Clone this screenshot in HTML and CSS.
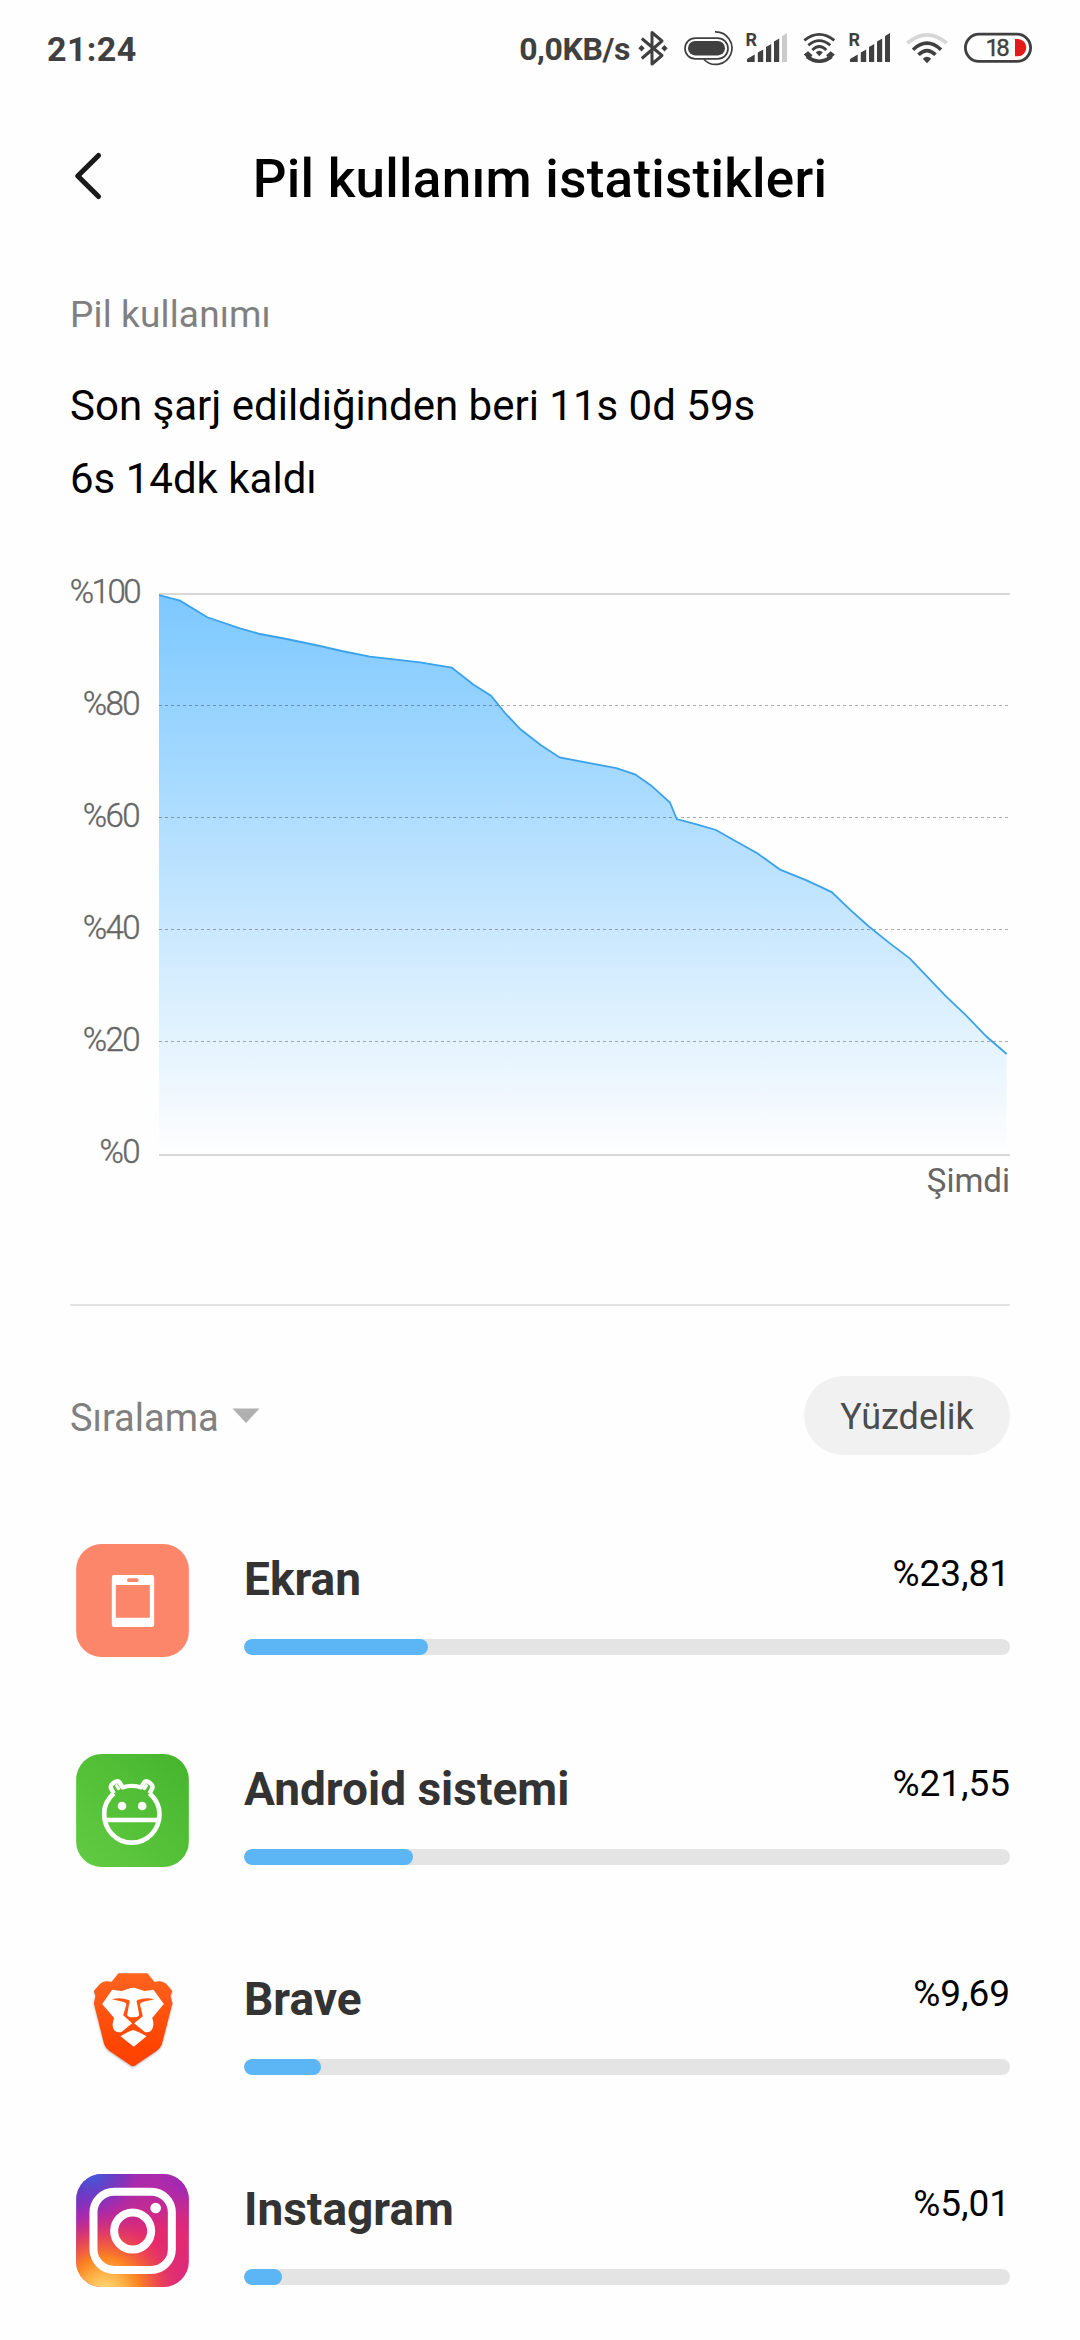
FILE: index.html
```html
<!DOCTYPE html>
<html lang="tr">
<head>
<meta charset="utf-8">
<title>Pil kullanım istatistikleri</title>
<link rel="stylesheet" href="styles.css">
</head>
<body>
<div class="status">
  <span class="clock">21:24</span>
  <div class="status-icons">
    <span class="speed">0,0KB/s</span>
    <svg class="i-bt" width="34" height="40" viewBox="636 29 34 40"><path d="M641.8 38.5 662 55.5 652 64V32.5L662 41 641.8 58.5" fill="none" stroke="#404040" stroke-width="3" stroke-linejoin="round"/><path d="m641.5 45 3.2 3.3-3.2 3.3-3.2-3.3zM664.5 45l3.2 3.3-3.2 3.3-3.2-3.3z" fill="#404040"/></svg>
    <svg class="i-oval" width="52" height="40" viewBox="683 29 52 40"><rect x="685" y="38.2" width="43" height="20.6" rx="10.3" fill="none" stroke="#404040" stroke-width="1.7"/><rect x="688" y="41" width="37" height="14.4" rx="7.2" fill="#404040"/><path d="M715 31.8A16.3 16.3 0 1 1 704 59.5" fill="none" stroke="#404040" stroke-width="1.7"/></svg>
    <svg class="i-sig" width="44" height="40" viewBox="745 29 44 40"><text x="745.6" y="46" class="roam">R</text><path d="M747 62v-3l7.7-4.5V62zM757.8 62v-9.5l5.4-3V62zM766 62V47l5.2-3v18zM774 62V41.5l5.2-3V62z" fill="#404040"/><path d="M782 62V36l5-3v29z" fill="#cbcbcb"/></svg>
    <svg class="i-call" width="36" height="40" viewBox="801 29 36 40"><g fill="none" stroke="#404040" stroke-width="2.8"><path d="M804.3 40.3Q819.3 28.5 834.3 40.3M808.3 45.3Q819.3 36 830.3 45.3M812.3 50Q819.3 43.2 826.3 50"/><path d="M807 56.5Q819.3 66 831.6 56.5" stroke-width="3.6"/></g><path d="M815.7 52.2q3.6-3 7.2 0l-3.6 4zM803.8 54.5l4.2-3.2 4.5 4-3.5 4.5zM834.8 54.5l-4.2-3.2-4.5 4 3.5 4.5z" fill="#404040"/></svg>
    <svg class="i-sig" width="44" height="40" viewBox="745 29 44 40"><text x="745.6" y="46" class="roam">R</text><path d="M747 62v-3l7.7-4.5V62zM757.8 62v-9.5l5.4-3V62zM766 62V47l5.2-3v18zM774 62V41.5l5.2-3V62zM782 62V36l5-3v29z" fill="#404040"/></svg>
    <svg class="i-wifi" width="46" height="40" viewBox="904 29 46 40"><g fill="none" stroke="#404040" stroke-width="3.6"><path d="M907.3 43.2Q927 26.5 946.7 43.2" stroke="#d6d6d6"/><path d="M913 49.7Q927 36.7 941 49.7M918.5 54.8Q927 46.3 935.5 54.8"/></g><path d="M922.8 58.8q4.2-4 8.4 0l-4.2 4.5z" fill="#404040"/></svg>
    <svg class="i-bat" width="68" height="40" viewBox="964 29 68 40"><rect x="965.4" y="34.2" width="65.2" height="27.2" rx="13.6" fill="none" stroke="#404040" stroke-width="2.8"/><text x="985.5" y="56.3" class="level">18</text><path d="M1015 39h3a8.3 8.6 0 0 1 0 17.2h-3z" fill="#e41b1b"/></svg>
  </div>
</div>
<header class="header">
  <svg class="back" width="40" height="60" viewBox="68 149 40 60"><path d="M98.5 155.5 77.8 176 98.5 196.5" fill="none" stroke="#1a1a1a" stroke-width="5.2" stroke-linecap="round" stroke-linejoin="round"/></svg>
  <h1 class="title">Pil kullanım istatistikleri</h1>
</header>
<main class="main">
  <h2 class="section">Pil kullanımı</h2>
  <p class="summary">Son şarj edildiğinden beri 11s 0d 59s<br>6s 14dk kaldı</p>
  <section class="chart">
    <div class="labels"><span class="full">%100</span><span>%80</span><span>%60</span><span>%40</span><span>%20</span><span>%0</span></div>
    <div class="plot">
      <svg width="851" height="563" viewBox="159 593 851 563">
        <defs><linearGradient id="fill" x1="0" y1="595" x2="0" y2="1154" gradientUnits="userSpaceOnUse"><stop offset="0" stop-color="#7cc8ff"/><stop offset="1" stop-color="#fefefe"/></linearGradient></defs>
        <path d="M159 594h851" stroke="#d8d8d8" stroke-width="2"/>
        <path fill="url(#fill)" d="M159 595 180 600.7 207.3 617.3 240 628.3 260 634 286.7 639 320 646 341.7 651 370 656.7 420 662.3 451.7 667.5 473.3 684.5 491 695.7 505 713 520.7 729.5 541 745.3 559.7 757.5 616.3 768.2 635 774.3 651 785.4 670 802.5 676.7 819 696.7 824.3 716 830 736.7 841.8 757.3 853.2 780 869.6 806.7 880.4 831.7 892.1 850 909.6 868.3 926 889.3 942.9 910 958.6 946 996.4 965 1014.3 986.7 1036.8 1006.7 1054V1154H159z"/>
        <path d="M159 705.5h851M159 817.5h851M159 929.5h851M159 1041.5h851" stroke="#000" stroke-opacity=".32" stroke-dasharray="3 3"/>
        <path fill="none" stroke="#3ba2ea" stroke-width="1.8" d="M159 595 180 600.7 207.3 617.3 240 628.3 260 634 286.7 639 320 646 341.7 651 370 656.7 420 662.3 451.7 667.5 473.3 684.5 491 695.7 505 713 520.7 729.5 541 745.3 559.7 757.5 616.3 768.2 635 774.3 651 785.4 670 802.5 676.7 819 696.7 824.3 716 830 736.7 841.8 757.3 853.2 780 869.6 806.7 880.4 831.7 892.1 850 909.6 868.3 926 889.3 942.9 910 958.6 946 996.4 965 1014.3 986.7 1036.8 1006.7 1054"/>
        <path d="M159 1155h851" stroke="#d8d8d8" stroke-width="2"/>
      </svg>
      <span class="now">Şimdi</span>
    </div>
  </section>
  <div class="controls">
    <span class="sort">Sıralama <svg width="28" height="16" viewBox="0 0 28 16"><path d="M.5.5h27L14 15z" fill="#b0b0b0"/></svg></span>
    <span class="pill">Yüzdelik</span>
  </div>
  <ul class="list">
    <li class="row">
      <svg width="113" height="113" viewBox="110 72 338 339"><rect x="110" y="72" width="338" height="339" rx="76" fill="#fb8669"/><path fill="#fff" fill-rule="evenodd" d="M224 165h113q7 0 7 7v142q0 7-7 7H224q-7 0-7-7V172q0-7 7-7zM229 195v98h102v-98zM268 175a5.5 5.5 0 0 0 0 11h24a5.5 5.5 0 0 0 0-11z"/></svg>
      <div class="info"><div class="line"><span class="name">Ekran</span><span class="pct">%23,81</span></div><div class="bar"><div class="value" style="width:24%"></div></div></div>
    </li>
    <li class="row">
      <svg width="113" height="113" viewBox="110 702 338 339"><defs><linearGradient id="green" x1="0" y1="1" x2="1" y2="0"><stop offset="0" stop-color="#62cb43"/><stop offset="1" stop-color="#45b52d"/></linearGradient></defs><rect x="110" y="702" width="338" height="339" rx="76" fill="url(#green)"/><g fill="none" stroke="#fff" stroke-width="13" stroke-linejoin="round"><path d="M237 806 231 797M315 806 321 797" stroke-width="9" stroke-linecap="round"/><path d="M223 820 215 806Q211 797 219 791L228 785Q237 781 242 790L249 802Q277 793 305 802L312 790Q317 781 325 785L334 791Q342 797 338 806L330 820"/><path d="M223 820C204 837 194 859 194 882 194 930 231 968 277 968S360 930 360 882C360 859 349 837 330 820M198 900H356" stroke-width="14"/></g><circle cx="247.5" cy="858" r="13" fill="#fff"/><circle cx="308" cy="858" r="13" fill="#fff"/></svg>
      <div class="info"><div class="line"><span class="name">Android sistemi</span><span class="pct">%21,55</span></div><div class="bar"><div class="value" style="width:22%"></div></div></div>
    </li>
    <li class="row">
      <svg width="113" height="113" viewBox="110 72 338 339"><defs><linearGradient id="lion" x1="0" y1="0" x2="0" y2="1"><stop offset="0" stop-color="#ff6420"/><stop offset=".8" stop-color="#ff4300"/></linearGradient></defs><path class="shadow" fill="url(#lion)" d="M237 100H324L345 126Q369 119 384 136L398 153 393 168 399 190 367 313Q363 324 352 332L288 376Q281 382 273 376L209 332Q198 324 194 313L163 190 168 168 163 153 178 136Q192 119 216 126z"/><path fill="#fff" d="M218 149 246 153 267 146Q281 141 294 146L315 153 342 149 373 192 338 234Q346 254 337 269 330 279 316 276L284 250 310 229 302 196Q300 189 309 186L345 178Q320 170 294 180 289 184 293 191L299 225Q297 232 281 232T263 225L269 191Q273 184 268 180 242 170 217 178L253 186Q262 189 260 196L251 226 278 250 246 276Q231 279 223 269 215 254 224 234L188 192zM281 270Q302 277 321 289L283 320 243 289Q260 277 281 270z"/></svg>
      <div class="info"><div class="line"><span class="name">Brave</span><span class="pct">%9,69</span></div><div class="bar"><div class="value" style="width:10%"></div></div></div>
    </li>
    <li class="row">
      <svg width="113" height="113" viewBox="110 702 338 339"><defs>
        <linearGradient id="ig" x1=".1" y1="0" x2=".7" y2="1"><stop offset="0" stop-color="#6534c4"/><stop offset=".25" stop-color="#a52baf"/><stop offset=".65" stop-color="#e5296d"/><stop offset="1" stop-color="#dc2c78"/></linearGradient>
        <radialGradient id="igw" gradientUnits="userSpaceOnUse" cx="195" cy="1060" r="240"><stop offset="0" stop-color="#ffe080"/><stop offset=".25" stop-color="#feb44a"/><stop offset=".45" stop-color="#fb8321"/><stop offset=".7" stop-color="#f04e47" stop-opacity=".75"/><stop offset="1" stop-color="#e5296d" stop-opacity="0"/></radialGradient>
        <radialGradient id="igb" gradientUnits="userSpaceOnUse" cx="160" cy="700" r="130"><stop offset="0" stop-color="#405fdc"/><stop offset="1" stop-color="#6534c4" stop-opacity="0"/></radialGradient>
        <radialGradient id="igp" gradientUnits="userSpaceOnUse" cx="448" cy="710" r="190"><stop offset="0" stop-color="#9229c0"/><stop offset="1" stop-color="#c52aa0" stop-opacity="0"/></radialGradient></defs>
        <rect x="110" y="702" width="338" height="339" rx="76" fill="url(#ig)"/><rect x="110" y="702" width="338" height="339" rx="76" fill="url(#igp)"/><rect x="110" y="702" width="338" height="339" rx="76" fill="url(#igb)"/><rect x="110" y="702" width="338" height="339" rx="76" fill="url(#igw)"/>
        <rect x="162" y="755" width="235" height="235" rx="62" fill="none" stroke="#fff" stroke-width="24"/><circle cx="279.5" cy="873" r="55.5" fill="none" stroke="#fff" stroke-width="24"/><circle cx="348.5" cy="804" r="16" fill="#fff"/></svg>
      <div class="info"><div class="line"><span class="name">Instagram</span><span class="pct">%5,01</span></div><div class="bar"><div class="value" style="width:5%"></div></div></div>
    </li>
  </ul>
</main>
</body>
</html>
```
FILE: styles.css
```css
* { box-sizing: border-box; }
html, body { margin: 0; padding: 0; }
body { width: 1080px; height: 2340px; overflow: hidden; background: #fefefe; color: #000; font-family: Roboto, "Noto Sans", sans-serif; }
svg { display: block; flex: none; }
h1, h2, p, ul { margin: 0; padding: 0; font-weight: 400; }

.status { height: 98px; padding: 0 48px 0 47px; display: flex; align-items: center; justify-content: space-between; color: #404040; }
.clock { font-size: 34px; font-weight: 700; letter-spacing: 0.4px; }
.status-icons { display: flex; align-items: center; }
.speed { font-size: 32px; font-weight: 700; letter-spacing: -0.4px; margin-right: 6px; }
.i-bt { margin-right: 13px; }
.i-oval { margin-right: 10px; }
.i-sig { margin-right: 12px; }
.i-call { margin-right: 11px; }
.i-wifi { margin-right: 14px; }
.roam { font-size: 18px; font-weight: 700; fill: #404040; }
.level { font-size: 24px; font-weight: 400; letter-spacing: -2.8px; fill: #404040; stroke: #404040; stroke-width: 0.4px; }

.header { height: 162px; padding: 0 68px; display: grid; grid-template-columns: 40px 1fr 40px; align-items: center; }
.title { font-size: 53px; line-height: 62px; font-weight: 500; letter-spacing: 0.25px; text-align: center; white-space: nowrap; }

.main { padding: 30px 70px 0; }
.section { font-size: 37px; line-height: 50px; letter-spacing: 0.15px; color: #808080; }
.summary { margin-top: 29px; font-size: 42px; line-height: 73px; }

.chart { margin-top: 21px; height: 672px; display: grid; grid-template-columns: 71px 851px; column-gap: 18px; }
.labels { display: flex; flex-direction: column; align-items: flex-end; padding-right: 2px; color: #666; font-size: 33px; font-weight: 300; line-height: 112px; letter-spacing: -1.6px; -webkit-text-stroke: 0.4px #666; }
.full { letter-spacing: -2.5px; }
.plot { padding-top: 57px; }
.now { display: block; margin-top: 3px; text-align: right; font-size: 33px; line-height: 44px; color: #666; }

.controls { margin-top: 96px; padding-top: 70px; border-top: 2px solid #e4e4e4; display: flex; justify-content: space-between; align-items: center; }
.sort { display: flex; align-items: center; gap: 13px; padding-top: 5px; font-size: 38px; color: #808080; }
.sort svg { margin-bottom: 5px; }
.pill { width: 206px; height: 79px; padding-top: 4px; border-radius: 40px; background: #f1f1f1; color: #4c4c4c; font-size: 36px; line-height: 75px; text-align: center; }

.list { margin-top: 89px; list-style: none; }
.row { height: 113px; margin-bottom: 97px; padding-left: 6px; display: flex; gap: 55px; }
.info { flex: 1; padding-top: 8px; }
.line { display: flex; justify-content: space-between; align-items: flex-start; height: 54px; }
.name { font-size: 46px; line-height: 54px; font-weight: 700; color: #333; }
.pct { font-size: 37px; line-height: 44px; }
.bar { margin-top: 33px; height: 16px; border-radius: 8px; background: #e4e4e4; overflow: hidden; }
.value { height: 16px; border-radius: 8px; background: #5cb6f5; }
.shadow { filter: drop-shadow(0 3px 3px rgba(0, 0, 0, 0.3)); }
```
